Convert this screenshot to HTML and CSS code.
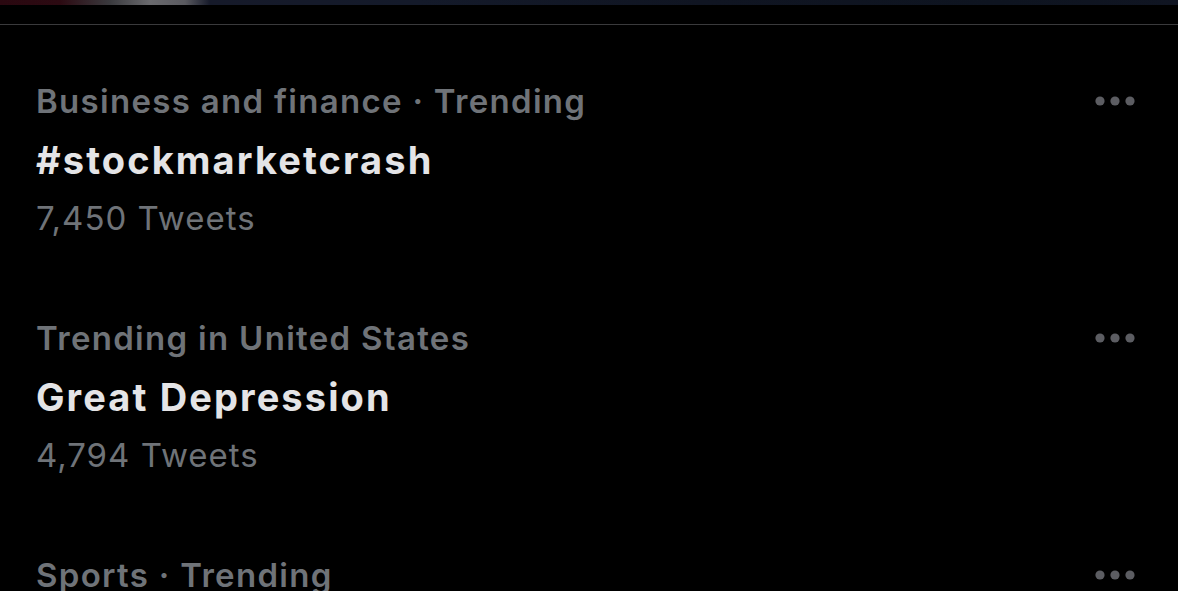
FILE: index.html
```html
<!DOCTYPE html>
<html lang="en">
<head>
<meta charset="utf-8">
<title>Trends</title>
<link rel="stylesheet" href="styles.css">
</head>
<body>
<div class="top-strip"></div>
<div class="divider"></div>
<ul class="trends">
  <li class="trend">
    <div class="trend-body">
      <div class="trend-meta">Business and finance · Trending</div>
      <div class="trend-title">#stockmarketcrash</div>
      <div class="trend-count">7,450 Tweets</div>
    </div>
    <button class="more" aria-label="More">
      <svg width="42" height="12" viewBox="0 0 42 12"><circle cx="6" cy="6" r="4.6"/><circle cx="21" cy="6" r="4.6"/><circle cx="36" cy="6" r="4.6"/></svg>
    </button>
  </li>
  <li class="trend">
    <div class="trend-body">
      <div class="trend-meta">Trending in United States</div>
      <div class="trend-title">Great Depression</div>
      <div class="trend-count">4,794 Tweets</div>
    </div>
    <button class="more" aria-label="More">
      <svg width="42" height="12" viewBox="0 0 42 12"><circle cx="6" cy="6" r="4.6"/><circle cx="21" cy="6" r="4.6"/><circle cx="36" cy="6" r="4.6"/></svg>
    </button>
  </li>
  <li class="trend">
    <div class="trend-body">
      <div class="trend-meta">Sports · Trending</div>
    </div>
    <button class="more" aria-label="More">
      <svg width="42" height="12" viewBox="0 0 42 12"><circle cx="6" cy="6" r="4.6"/><circle cx="21" cy="6" r="4.6"/><circle cx="36" cy="6" r="4.6"/></svg>
    </button>
  </li>
</ul>
</body>
</html>
```
FILE: styles.css
```css
html, body {
  margin: 0;
  padding: 0;
  background: #000;
  overflow: hidden;
}
body {
  font-family: Inter, "Noto Sans", sans-serif;
  width: 1178px;
  height: 591px;
}
.top-strip {
  height: 5px;
  background: linear-gradient(90deg, #2a0810 0px, #2c0a12 60px, #3a3a3e 110px, #6a6a6e 150px, #5a5a60 185px, #161a2a 210px, #141a2a 420px, #101522 700px, #0e1420 1000px, #101522 1178px);
}
.divider {
  margin-top: 19px;
  height: 1px;
  background: #3a3a3c;
}
.trends {
  list-style: none;
  margin: 0;
  padding: 56px 0 0;
}
.trend {
  display: flex;
  justify-content: space-between;
  align-items: flex-start;
  padding: 0 42px 80px 36px;
}
.trend-meta {
  font-size: 33px;
  line-height: 40px;
  font-weight: 600;
  letter-spacing: 1.3px;
  color: #6f7378;
}
.trend-title {
  margin-top: 17px;
  font-size: 38px;
  line-height: 44px;
  font-weight: 700;
  letter-spacing: 2.1px;
  color: #e4e4e6;
}
.trend-count {
  margin-top: 16px;
  font-size: 33px;
  line-height: 40px;
  font-weight: 400;
  letter-spacing: 1px;
  color: #6f7378;
}
.more {
  margin-top: 14px;
  padding: 0;
  border: 0;
  background: none;
  display: flex;
}
.more svg {
  fill: #5c5d62;
}
```
